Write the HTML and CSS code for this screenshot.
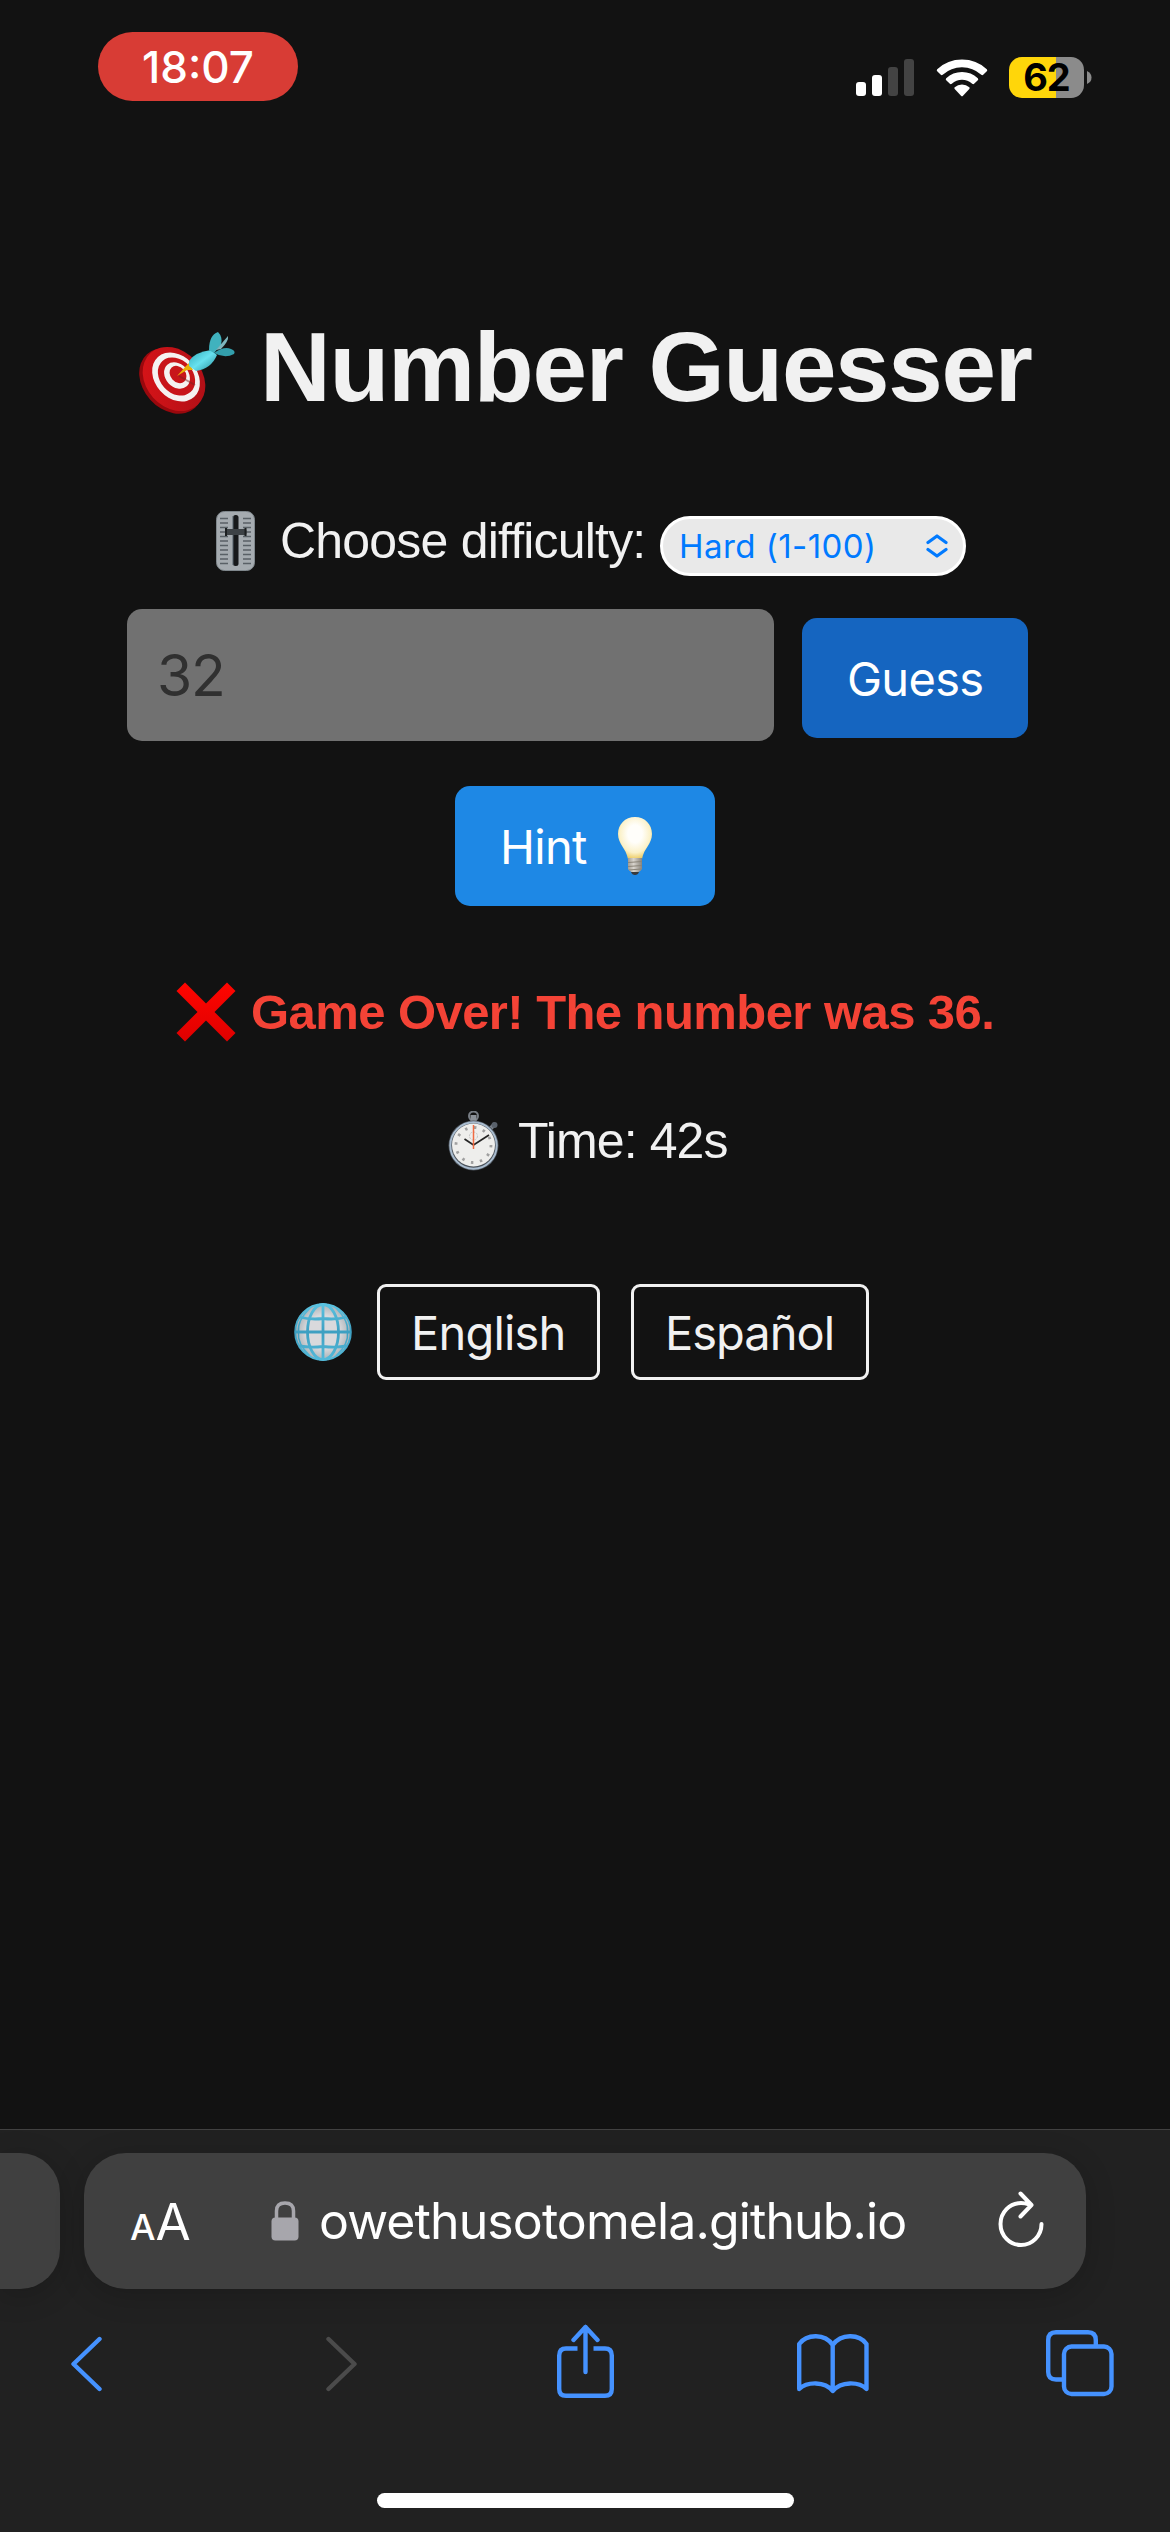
FILE: index.html
```html
<!DOCTYPE html>
<html lang="en">
<head>
<meta charset="utf-8">
<title>Number Guesser</title>
<link rel="stylesheet" href="styles.css">
</head>
<body>
<header class="status">
  <div class="clock">18:07</div>
  <div class="indicators">
    <svg width="58" height="37" viewBox="0 0 58 37" fill="#fff">
      <rect y="23" width="10" height="14" rx="3"/>
      <rect x="16" y="16" width="10" height="21" rx="3"/>
      <rect x="32" y="8" width="10" height="29" rx="3" fill="#434343"/>
      <rect x="48" width="10" height="37" rx="3" fill="#434343"/>
    </svg>
    <svg class="wifi" width="52" height="38" viewBox="0 0 52 38" fill="#fff">
      <path d="M1.2 10.2Q.2 11.2 1.2 12.2L4.8 15.8Q5.7 16.7 6.7 15.8Q15 8.3 26 8.3Q37 8.3 45.3 15.8Q46.3 16.7 47.2 15.8L50.8 12.2Q51.8 11.2 50.8 10.2Q40.400.5 26 .5Q11.600.5 1.200 10.200Z"/>
      <path d="M10.200 19.200Q9.200 20.200 10.200 21.200L13.900 24.700Q14.800 25.600 15.800 24.700Q20.200 20.800 26 20.800Q31.800 20.800 36.200 24.700Q37.200 25.600 38.100 24.700L41.800 21.200Q42.800 20.200 41.800 19.200Q35.200 13 26 13Q16.800 13 10.200 19.200Z"/>
      <path d="M18.700 28.200Q17.900 29 18.700 29.900L25 36.700Q26 37.700 27 36.700L33.300 29.900Q34.100 29 33.300 28.200Q30.200 25.500 26 25.500Q21.800 25.500 18.700 28.200Z"/>
    </svg>
    <div class="battery">62</div>
    <svg class="nub" width="5" height="13" viewBox="0 0 5 13"><path d="M0 0Q4.500 2 4.500 6.500Q4.500 11 0 13Z" fill="#8b8b8b"/></svg>
  </div>
</header>

<main class="game">
  <h1 class="title">
    <svg width="96" height="84" viewBox="0 0 96 84">
      <defs>
        <linearGradient id="board" x1="0" y1="0" x2="1" y2="1"><stop offset="0" stop-color="#dc1418"/><stop offset="1" stop-color="#a90f16"/></linearGradient>
        <linearGradient id="dart" x1="0" y1="0" x2="1" y2="1"><stop offset="0" stop-color="#2fa9b8"/><stop offset=".5" stop-color="#67e1ef"/><stop offset="1" stop-color="#238996"/></linearGradient>
      </defs>
      <ellipse cx="32" cy="49" rx="28" ry="36" transform="rotate(-42 32 49)" fill="#99080d"/>
      <ellipse cx="35" cy="47" rx="28" ry="35" transform="rotate(-42 35 47)" fill="url(#board)"/>
      <ellipse cx="37" cy="45" rx="21" ry="27" transform="rotate(-42 37 45)" fill="#f5f2f1"/>
      <ellipse cx="37.500" cy="44.500" rx="16.500" ry="21" transform="rotate(-42 37.500 44.500)" fill="#c8151a"/>
      <ellipse cx="38" cy="43.500" rx="11.500" ry="14.500" transform="rotate(-42 38 43.500)" fill="#f5f2f1"/>
      <ellipse cx="39" cy="42.500" rx="7.500" ry="9.500" transform="rotate(-42 39 42.500)" fill="#c8151a"/>
      <path d="M40 44L56 53" stroke="#7c2222" stroke-width="2" opacity=".5"/>
      <path d="M38 44L47 34L50 31L54 38L48 38Z" fill="#e9b008"/>
      <path d="M50 29Q56 20 72 18L78 23Q72 37 57 39L50 34Z" fill="url(#dart)"/>
      <path d="M70 18Q70 3 79 0Q84 5 82 13L75 21Z" fill="#40b2be"/>
      <path d="M77 18L89 4Q90 9 82 17Z" fill="#7eb7be"/>
      <path d="M75 21Q85 14 92 17Q97 19 95 22Q86 27 75 21Z" fill="#339fac"/>
    </svg>
    <span>Number Guesser</span>
  </h1>

  <div class="difficulty">
    <svg width="39" height="60" viewBox="0 0 39 60">
      <rect x=".5" y=".5" width="38" height="59" rx="8" fill="#a5abb0" stroke="#7f878c"/>
      <path d="M4 7.500H12M4 12H12M4 16.500H12M4 21H12M4 25.500H12M4 30H12M4 34.500H12M4 39H12M4 43.500H12M4 48H12M4 52.500H12M27 7.500H35M27 12H35M27 16.500H35M27 21H35M27 25.500H35M27 30H35M27 34.500H35M27 39H35M27 43.500H35M27 48H35M27 52.500H35" stroke="#596066" stroke-width="1.300"/>
      <rect x="17" y="4" width="5.500" height="51" rx="2.500" fill="#17191b"/>
      <path d="M17 5V54" stroke="#55616a"/>
      <rect x="9" y="18" width="21.500" height="6" rx="1.500" fill="#3d4246"/>
      <path d="M10 17V25M29.500 17V25" stroke="#1c1f21" stroke-width="2"/>
    </svg>
    <span class="difficulty-label">Choose difficulty:</span>
    <div class="select">
      <span>Hard (1-100)</span>
      <svg width="22" height="24" viewBox="0 0 22 24" fill="none" stroke="#007aff" stroke-width="3.200" stroke-linecap="round" stroke-linejoin="round"><path d="M2 8.500L11 2L20 8.500M2 15.500L11 22L20 15.500"/></svg>
    </div>
  </div>

  <div class="entry">
    <div class="number">32</div>
    <div class="button guess">Guess</div>
  </div>

  <div class="button hint">
    <span>Hint</span>
    <svg width="36" height="58" viewBox="0 0 36 58">
      <defs>
        <radialGradient id="glass" cx=".5" cy=".4" r=".6"><stop offset=".35" stop-color="#fffefa"/><stop offset=".75" stop-color="#fbf1c8"/><stop offset="1" stop-color="#edcc64"/></radialGradient>
        <linearGradient id="cap"><stop offset="0" stop-color="#a29c92"/><stop offset=".4" stop-color="#d8d4cd"/><stop offset="1" stop-color="#89847c"/></linearGradient>
      </defs>
      <path d="M18 0C8 0 1 7.500 1 17C1 27 9 31 11 42H25C27 31 35 27 35 17C35 7.500 28 0 18 0Z" fill="url(#glass)"/>
      <path d="M11 41H25V52Q24 54 21.500 55H14.500Q12 54 11 52Z" fill="url(#cap)"/>
      <path d="M11 45.500L25 44.500M11 49.500L25 48.500M12 53L24 52" stroke="#8b8579" stroke-width="1"/>
      <path d="M14 55H22Q21 58 18 58Q15 58 14 55Z" fill="#38393b"/>
    </svg>
  </div>

  <p class="result">
    <svg width="60" height="60" viewBox="0 0 60 60">
      <defs><linearGradient id="cross" x2="0" y2="1"><stop offset="0" stop-color="#ff0500"/><stop offset="1" stop-color="#df0000"/></linearGradient></defs>
      <path d="M9 .5L30 21.500L51 .5L59.500 9L38.500 30L59.500 51L51 59.500L30 38.500L9 59.500L.5 51L21.500 30L.5 9Z" fill="url(#cross)"/>
    </svg>
    <span>Game Over! The number was 36.</span>
  </p>

  <p class="timer">
    <svg width="52" height="60" viewBox="0 0 52 60">
      <circle cx="25.500" cy="5" r="4.500" fill="none" stroke="#777d84" stroke-width="2"/>
      <rect x="22.500" y="4" width="6" height="7" fill="#8b9198"/>
      <path d="M42 18L47 13" stroke="#7b838c" stroke-width="4"/>
      <circle cx="46.500" cy="14" r="3" fill="#59616b"/>
      <circle cx="25.500" cy="34.500" r="25" fill="#4c535b"/>
      <circle cx="25.500" cy="34.500" r="23.200" fill="none" stroke="#a9bccf" stroke-width="2"/>
      <circle cx="25.500" cy="34" r="21.500" fill="#eeeeec"/>
      <circle cx="25.500" cy="34" r="17.500" fill="none" stroke="#a0a0a0" stroke-width="2.800" stroke-dasharray="2.500 6.660"/>
      <circle cx="25.500" cy="25" r="4" fill="none" stroke="#c4c4c4" stroke-dasharray="2 1"/>
      <path d="M16.500 28L25.500 34L41 24" fill="none" stroke="#252525" stroke-width="1.700"/>
      <path d="M25.500 14V38" stroke="#f06b42" stroke-width="1.500"/>
    </svg>
    <span>Time: 42s</span>
  </p>

  <div class="languages">
    <svg width="58" height="58" viewBox="0 0 58 58">
      <defs>
        <radialGradient id="sea"><stop offset=".6" stop-color="#d9d9dc"/><stop offset="1" stop-color="#a8b1b6"/></radialGradient>
        <linearGradient id="grid" gradientUnits="userSpaceOnUse" x1="0" y1="0" x2="0" y2="58"><stop offset="0" stop-color="#5cc5e3"/><stop offset=".5" stop-color="#3d9fc1"/><stop offset="1" stop-color="#54bbdb"/></linearGradient>
      </defs>
      <circle cx="29" cy="29" r="28" fill="url(#sea)"/>
      <g fill="none" stroke="url(#grid)" stroke-width="2.800">
        <circle cx="29" cy="29" r="27.800" stroke-width="2"/>
        <ellipse cx="29" cy="29" rx="15.500" ry="27.500"/>
        <path d="M29 1V57M1 29H57M5 14Q17 17 29 15.500Q42 17 53 14M5 43Q17 45 29 43.500Q42 45 53 43"/>
        <path d="M16 5Q3 18 4.500 29Q3 41 16 53M42 5Q55 18 53.500 29Q55 41 42 53" stroke-width="1.500"/>
      </g>
    </svg>
    <div class="language english">English</div>
    <div class="language spanish">Español</div>
  </div>
</main>

<footer class="browser">
  <div class="tabs">
    <div class="previous"></div>
    <div class="address">
      <div class="reader"><span class="small">A</span><span class="large">A</span></div>
      <svg class="lock" width="28" height="40" viewBox="0 0 28 40"><rect x=".5" y="16.500" width="27" height="23" rx="4" fill="#a7a6ac"/><path d="M5.500 18V10Q5.500 2 14 2Q22.500 2 22.500 10V18" fill="none" stroke="#a7a6ac" stroke-width="3.500"/></svg>
      <span class="url">owethusotomela.github.io</span>
      <svg class="reload" width="46" height="56" viewBox="0 0 46 56" fill="none" stroke="#fff" stroke-width="4" stroke-linecap="round" stroke-linejoin="round"><path d="M31 13.500Q27 12 23 12A20.500 21 0 1 0 43.500 33M22.500 2.500L33.500 14L22.500 25.500"/></svg>
    </div>
  </div>
  <nav class="toolbar">
    <svg class="back" width="32" height="56" viewBox="0 0 32 56"><path d="M28.500 3L2.500 28L28.500 53"/></svg>
    <svg class="forward" width="32" height="56" viewBox="0 0 32 56"><path d="M2.500 3L28.500 28L2.500 53"/></svg>
    <svg class="share" width="57" height="76" viewBox="0 0 57 76"><path d="M20.500 24.500H9Q2.200 24.500 2.200 31.500V65Q2.200 71.800 9 71.800H48Q54.800 71.800 54.800 65V31.500Q54.800 24.500 48 24.500H36.500" stroke-linecap="butt"/><path d="M28.500 48V3M16.500 16L28.500 3L40.500 16"/></svg>
    <svg class="book" width="72" height="62" viewBox="0 0 72 62"><path d="M35.700 57V12C28 .5 10 .5 2.200 11V56C10 48.500 28 48 35.700 58C44 48 62 48.500 69.500 56V11C62 .5 44 .5 35.700 12"/></svg>
    <svg class="pages" width="68" height="68" viewBox="0 0 68 68"><path d="M16 49.500H10Q2.200 49.500 2.200 42V10Q2.200 2.200 10 2.200H42Q49.800 2.200 49.800 10V15" stroke-linecap="butt"/><rect x="18" y="16.500" width="47.500" height="47.500" rx="7.500"/></svg>
  </nav>
  <div class="home"></div>
</footer>
</body>
</html>
```
FILE: styles.css
```css
* { box-sizing: border-box; }
body {
  margin: 0;
  width: 1170px;
  height: 2532px;
  display: flex;
  flex-direction: column;
  overflow: hidden;
  background: #121212;
  color: #f1f1f1;
  font-family: "Inter", "Liberation Sans", sans-serif;
  font-size: 47px;
  white-space: nowrap;
}
svg { display: block; flex: none; }
.status {
  display: flex;
  justify-content: space-between;
  align-items: flex-start;
  height: 310px;
  padding: 32px 78px 0 98px;
}
.clock {
  width: 200px;
  height: 69px;
  border-radius: 35px;
  background: #d83c35;
  color: #fff;
  font-size: 44px;
  font-weight: 500;
  line-height: 70px;
  text-align: center;
}
.indicators { display: flex; align-items: flex-start; padding-top: 27px; }
.wifi { margin-left: 22px; }
.battery {
  width: 75px;
  height: 41px;
  margin: -2px 3px 0 21px;
  border-radius: 13px;
  background: linear-gradient(90deg, #ffd60a 47px, #8b8b8b 47px);
  color: #000;
  font-size: 38px;
  font-weight: 700;
  line-height: 41px;
  text-align: center;
  letter-spacing: -1px;
}
.nub { margin-top: 12px; }
.game {
  display: flex;
  flex-direction: column;
  height: 1819px;
  font-family: "Liberation Sans", sans-serif;
}
.title {
  display: flex;
  align-items: flex-start;
  gap: 25px;
  height: 200px;
  margin: 0;
  padding-left: 139px;
  font-size: 98px;
  font-weight: 700;
  line-height: 114px;
  letter-spacing: -1.3px;
}
.title svg { margin-top: 22px; }
.difficulty {
  display: flex;
  align-items: flex-start;
  height: 99px;
  padding-left: 216px;
  font-size: 50px;
  line-height: 63px;
}
.difficulty svg { margin-top: 1px; }
.difficulty-label { width: 380px; margin: 0 0 0 25px; letter-spacing: -.8px; }
.select {
  display: flex;
  align-items: center;
  justify-content: space-between;
  width: 306px;
  height: 60px;
  margin-top: 6px;
  padding: 0 15px 0 16px;
  border: 3px solid #fff;
  border-radius: 30px;
  background: #e9e9e9;
  color: #007aff;
  font-family: "Inter", sans-serif;
  font-size: 33px;
  letter-spacing: .45px;
}
.select svg { margin: 0; }
.entry {
  display: flex;
  align-items: flex-start;
  gap: 28px;
  height: 177px;
  padding-left: 127px;
}
.number {
  width: 647px;
  height: 132px;
  padding-left: 30px;
  border-radius: 15px;
  background: #717171;
  color: #303030;
  font-family: "Inter", sans-serif;
  font-size: 57px;
  line-height: 133px;
  letter-spacing: -1.3px;
}
.button {
  display: flex;
  align-items: center;
  height: 120px;
  border-radius: 15px;
  color: #fff;
  font-family: "Inter", sans-serif;
  letter-spacing: -.7px;
}
.guess { width: 226px; margin-top: 9px; padding-left: 45px; background: #1565c0; }
.hint {
  justify-content: space-between;
  width: 260px;
  margin-left: 455px;
  padding: 0 62px 0 45px;
  background: #1e88e5;
}
.result, .timer {
  display: flex;
  align-items: flex-start;
  margin: 0;
  line-height: 61px;
}
.result {
  gap: 15px;
  height: 129px;
  margin-top: 76px;
  padding-left: 176px;
  color: #f44336;
  font-size: 49px;
  font-weight: 700;
  letter-spacing: -.57px;
}
.timer { gap: 18px; height: 173px; padding-left: 448px; font-size: 50px; letter-spacing: -.9px; }
.languages { display: flex; align-items: center; height: 96px; padding-left: 294px; }
.language {
  height: 96px;
  padding-left: 31px;
  border: 3px solid #f1f1f1;
  border-radius: 9px;
  font-family: "Inter", sans-serif;
  line-height: 91px;
}
.english { width: 223px; margin: 0 31px 0 25px; letter-spacing: -.8px; }
.spanish { width: 238px; letter-spacing: -1px; }
.browser {
  display: flex;
  flex-direction: column;
  height: 403px;
  border-top: 1px solid #414141;
  background: #212121;
}
.tabs { display: flex; gap: 24px; height: 171px; padding-top: 23px; }
.previous, .address { height: 136px; background: #404040; box-shadow: 0 6px 30px rgba(0, 0, 0, .18); }
.previous { width: 60px; border-radius: 0 40px 40px 0; }
.address {
  display: flex;
  align-items: center;
  width: 1002px;
  padding-left: 46px;
  border-radius: 42px;
  color: #fff;
}
.reader { display: flex; align-items: baseline; width: 141px; }
.small { font-size: 36px; font-weight: 500; }
.large { font-size: 51px; }
.url { width: 628px; padding-left: 20px; font-size: 50px; letter-spacing: -.9px; }
.reload { margin: -4px 0 0 71px; }
.toolbar {
  display: flex;
  align-items: center;
  height: 120px;
  margin-top: 3px;
  padding-left: 71px;
  fill: none;
  stroke: #4592ff;
  stroke-width: 4.4;
  stroke-linecap: round;
  stroke-linejoin: round;
}
.forward { margin-left: 223px; stroke: #4b4b4b; }
.share { margin: 0 0 4px 199px; }
.book { margin-left: 183px; }
.pages { margin-left: 177px; }
.home { width: 417px; height: 15px; margin: 69px 0 0 377px; border-radius: 8px; background: #fff; }
```
